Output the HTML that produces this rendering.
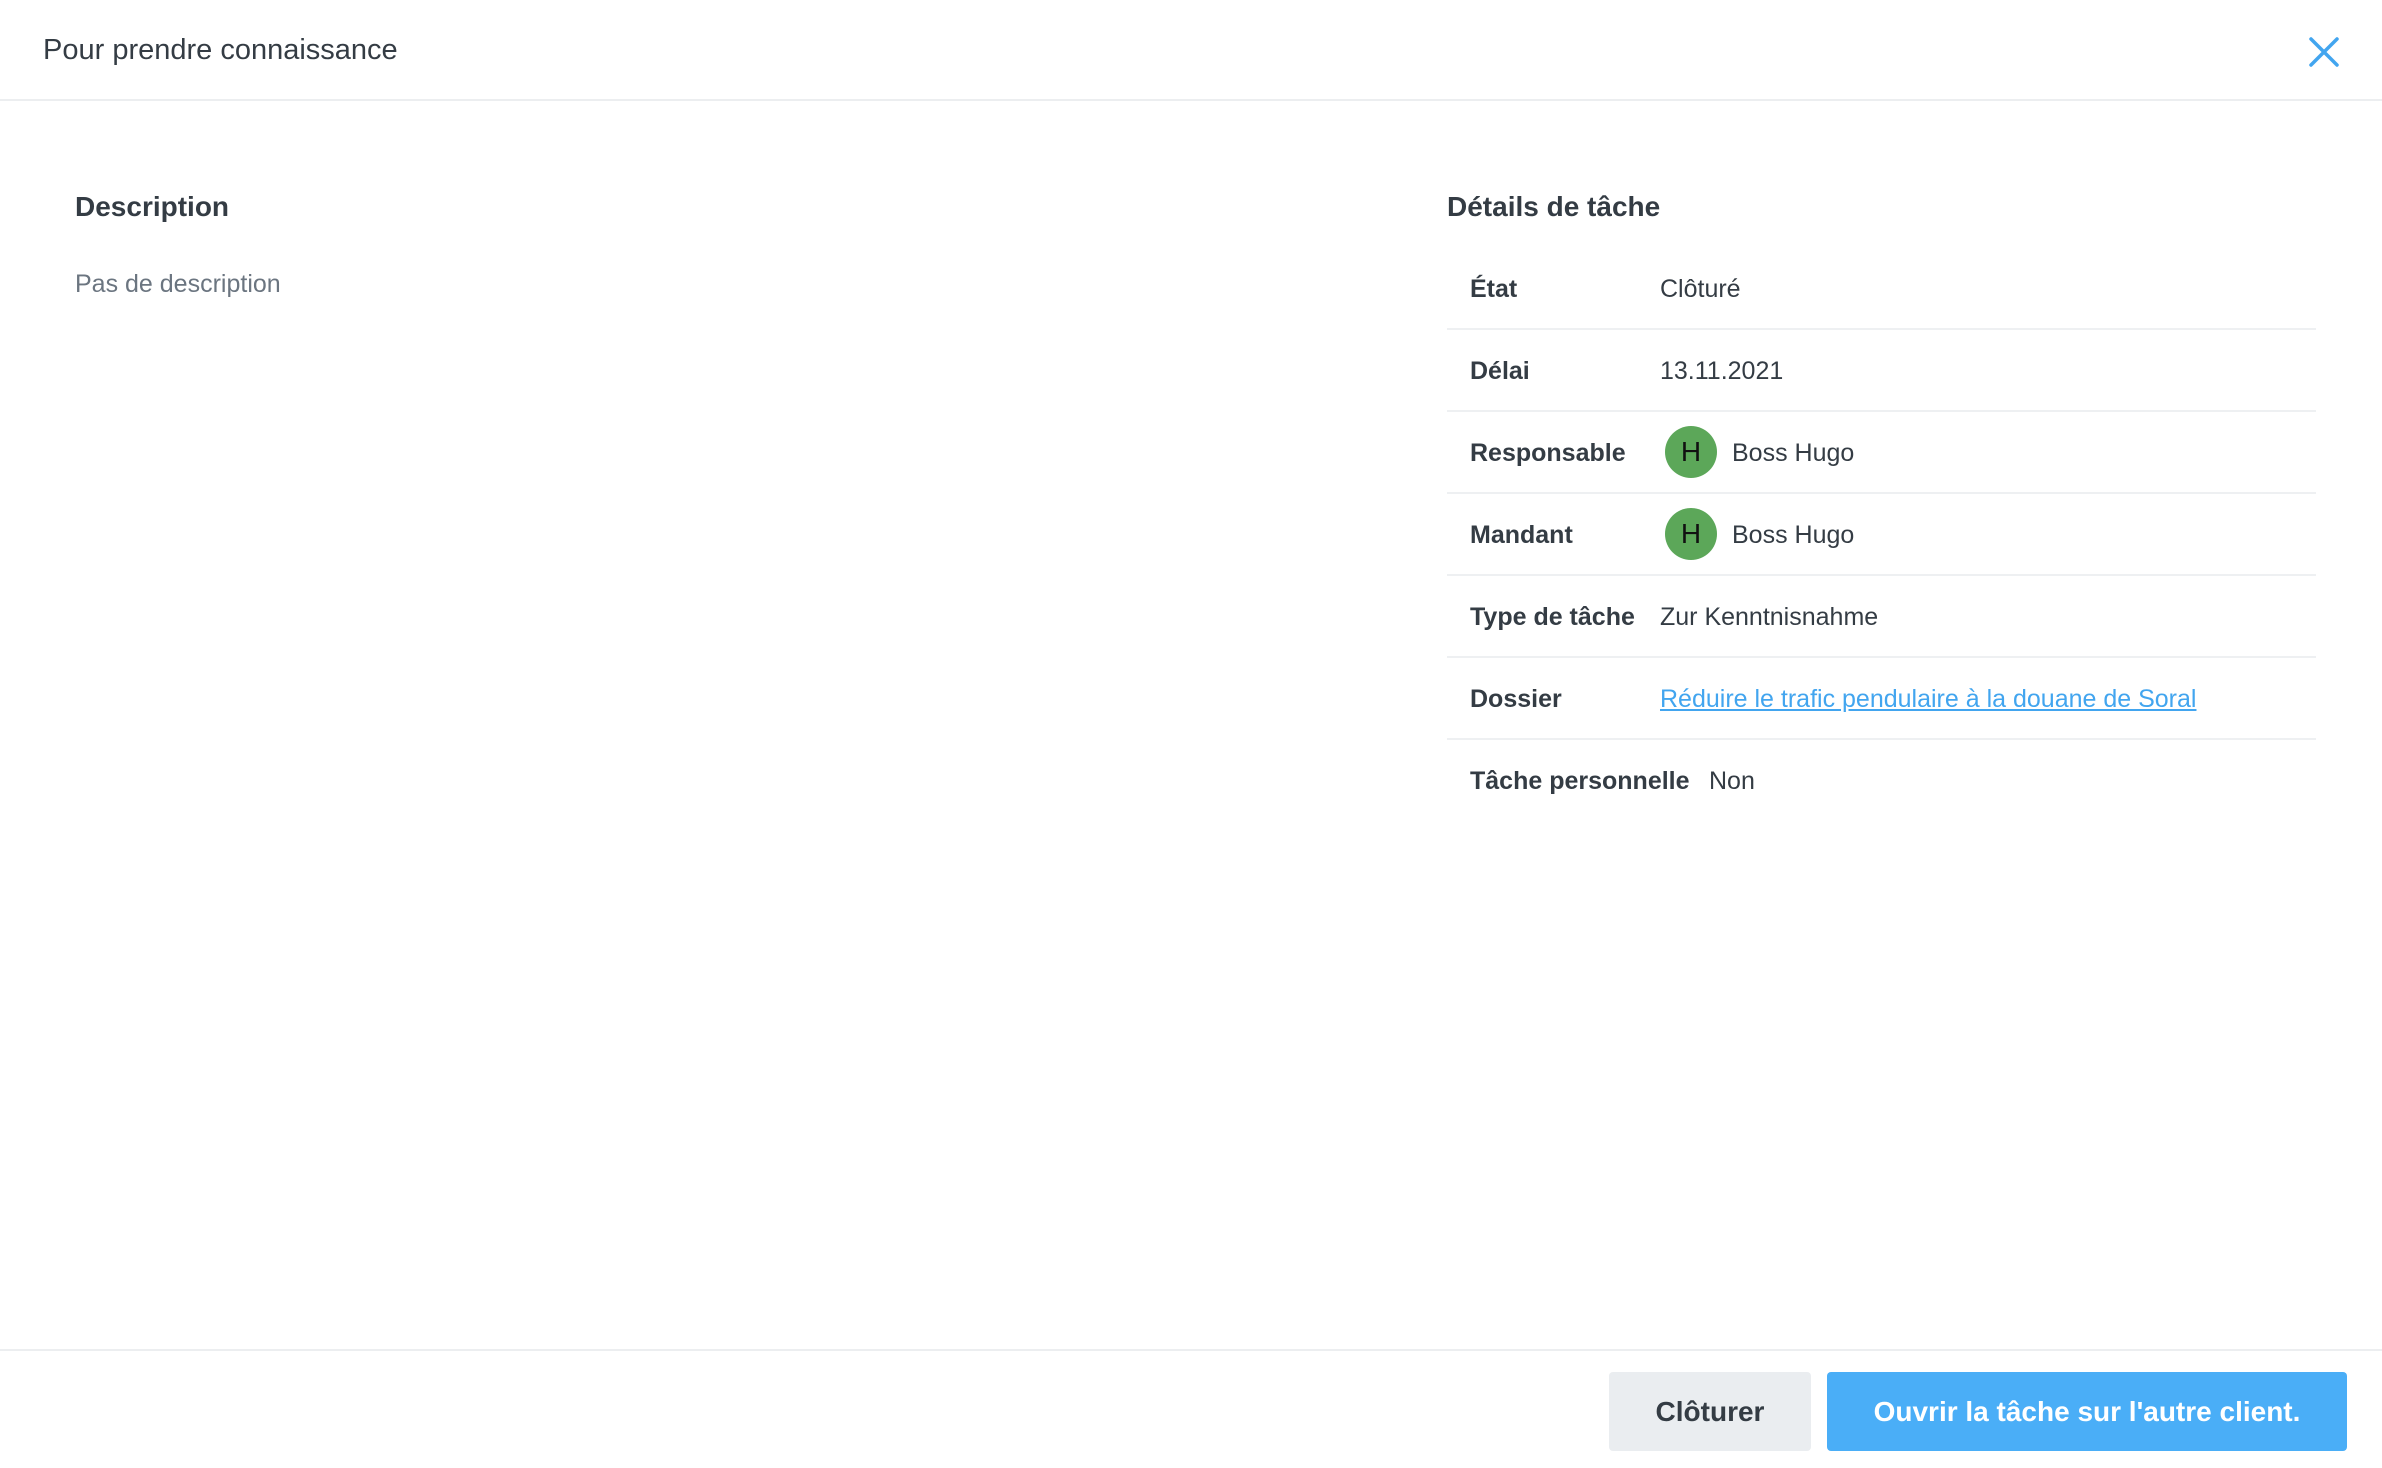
<!DOCTYPE html>
<html><head><meta charset="utf-8"><style>
*{margin:0;padding:0;box-sizing:border-box}
body{width:2382px;height:1468px;background:#fff;font-family:"Liberation Sans",sans-serif;color:#343c44;position:relative;overflow:hidden}
.hdr{position:absolute;left:0;top:0;width:2382px;height:101px;border-bottom:2px solid #eceef0}
.hdr h1{position:absolute;left:43px;top:34px;font-size:29px;font-weight:500;color:#343c44}
.x{position:absolute;left:2308px;top:36px}
.h2{position:absolute;font-size:28px;font-weight:600;color:#343c44}
.desc{position:absolute;left:75px;top:270px;font-size:25px;color:#6b7580}
.row{position:absolute;left:1447px;width:869px;height:82px;border-bottom:2px solid #eef0f2;font-size:25px}
.row:last-of-type{border-bottom:none}
.row .l{position:absolute;left:23px;top:27px;font-weight:700}
.row .v{position:absolute;left:213px;top:27px;white-space:nowrap}
.av{position:absolute;left:218px;top:14px;width:52px;height:52px;border-radius:50%;background:#5ca759;color:#111;text-align:center;line-height:52px;font-size:28px}
a{color:#42a5ef;text-decoration:underline}
.ftr{position:absolute;left:0;top:1349px;width:2382px;border-top:2px solid #eceef0}
.btn{position:absolute;top:1372px;height:79px;border-radius:4px;font-size:28px;font-weight:600;text-align:center;line-height:79px}
</style></head><body>
<div class="hdr"><h1>Pour prendre connaissance</h1>
<svg class="x" width="32" height="32" viewBox="0 0 32 32"><path d="M3 3L29 29M29 3L3 29" stroke="#42a5ef" stroke-width="3.5" stroke-linecap="round"/></svg></div>
<div class="h2" style="left:75px;top:191px">Description</div>
<div class="desc">Pas de description</div>
<div class="h2" style="left:1447px;top:191px">Détails de tâche</div>
<div class="row" style="top:248px"><span class="l">État</span><span class="v">Clôturé</span></div>
<div class="row" style="top:330px"><span class="l">Délai</span><span class="v">13.11.2021</span></div>
<div class="row" style="top:412px"><span class="l">Responsable</span><span class="av">H</span><span class="v" style="left:285px">Boss Hugo</span></div>
<div class="row" style="top:494px"><span class="l">Mandant</span><span class="av">H</span><span class="v" style="left:285px">Boss Hugo</span></div>
<div class="row" style="top:576px"><span class="l">Type de tâche</span><span class="v">Zur Kenntnisnahme</span></div>
<div class="row" style="top:658px"><span class="l">Dossier</span><span class="v"><a>Réduire le trafic pendulaire à la douane de Soral</a></span></div>
<div class="row" style="top:740px;border-bottom:none"><span class="l">Tâche personnelle</span><span class="v" style="left:262px">Non</span></div>
<div class="ftr"></div>
<div class="btn" style="left:1609px;width:202px;background:#eaedf0;color:#343c44">Clôturer</div>
<div class="btn" style="left:1827px;width:520px;background:#4aaef7;color:#fff">Ouvrir la tâche sur l'autre client.</div>
</body></html>
